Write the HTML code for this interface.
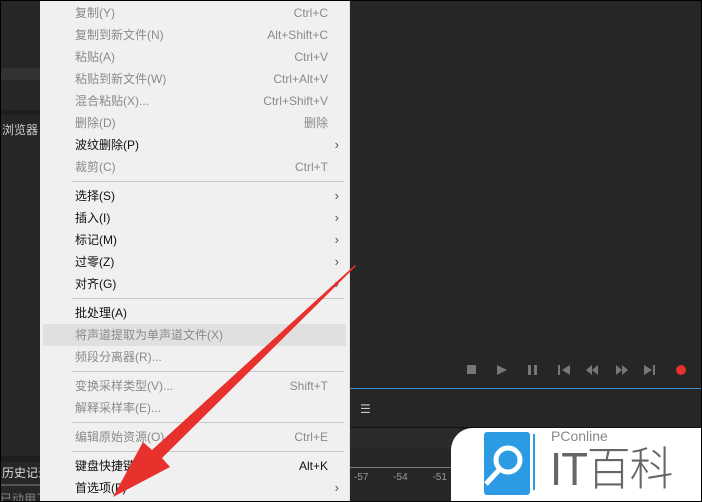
<!DOCTYPE html><html><head><meta charset="utf-8"><style>
html,body{margin:0;width:702px;height:502px;overflow:hidden}
body{background:#262626;position:relative;font-family:"Liberation Sans","Noto Sans CJK SC",sans-serif;}
.menu{position:absolute;left:40px;top:0;width:309px;height:502px;background:#f0f0f0;border-right:1px solid #ddd}
.it{position:absolute;left:0;width:309px;height:22px;line-height:22px;font-size:12px}
.it .l{position:absolute;left:35px}
.it .r{position:absolute;right:21px}
.it .a{position:absolute;right:10px;font-size:13px;color:#555}
.d{color:#8a8a8a}.e{color:#111}
.sep{position:absolute;left:32px;width:272px;height:1px;background:#c8c8c8}
</style></head><body>
<div style="position:absolute;left:0;top:68px;width:40px;height:12px;background:#333"></div>
<div style="position:absolute;left:0;top:110px;width:40px;height:5px;background:#1e1e1e"></div>
<div style="position:absolute;left:2px;top:121px;color:#ccc;font-size:12px">浏览器</div>
<div style="position:absolute;left:0;top:456px;width:40px;height:6px;background:#1e1e1e"></div>
<div style="position:absolute;left:2px;top:464px;color:#ddd;font-size:12px">历史记录</div>
<div style="position:absolute;left:0;top:484px;width:40px;height:2px;background:#555"></div>
<div style="position:absolute;left:0;top:490px;color:#888;font-size:12px">已动用了</div>
<div style="position:absolute;left:349px;top:388px;width:353px;height:1px;background:#3a8fd0"></div>
<div style="position:absolute;left:349px;top:427px;width:353px;height:1px;background:#111"></div>
<div style="position:absolute;left:349px;top:428px;width:110px;height:20px;background:#2b2b2b"></div>
<div style="position:absolute;left:360px;top:402px;color:#ccc;font-size:12px">☰</div>
<div style="position:absolute;left:349px;top:467px;width:110px;height:1px;background:#777"></div>
<div style="position:absolute;left:354px;top:472px;color:#999;font-size:10px;word-spacing:22px">-57 -54 -51</div>
<div style="position:absolute;left:467px;top:365px;width:9px;height:9px;background:#777"></div>
<svg style="position:absolute;left:490px;top:362px" width="200" height="16" fill="#777">
<polygon points="7,3 17,8 7,13"/><rect x="38" y="3" width="3" height="10"/><rect x="44" y="3" width="3" height="10"/>
<rect x="68" y="3" width="2" height="10"/><polygon points="80,3 72,8 80,13"/>
<polygon points="102,3 96,8 102,13"/><polygon points="108,3 102,8 108,13"/>
<polygon points="126,3 132,8 126,13"/><polygon points="132,3 138,8 132,13"/>
<polygon points="154,3 162,8 154,13"/><rect x="163" y="3" width="2" height="10"/>
<circle cx="191" cy="8" r="5" fill="#e5302e"/></svg>
<div style="position:absolute;left:451px;top:428px;width:251px;height:74px;background:#fff;border-top-left-radius:22px"></div>
<svg style="position:absolute;left:484px;top:432px" width="60" height="66"><rect x="0" y="0" width="46" height="63" rx="3" fill="#2d9be4"/><path d="M50 2v56" stroke="#2d9be4" stroke-width="2"/><circle cx="24" cy="28" r="12" fill="none" stroke="#fff" stroke-width="5"/><path d="M15 38L2 52" stroke="#fff" stroke-width="5"/></svg>
<div style="position:absolute;left:551px;top:428px;color:#888;font-size:14px">PConline</div>
<div style="position:absolute;left:550px;top:442px;color:#666;font-size:46px;line-height:54px;letter-spacing:-1px;font-weight:300;transform:scaleX(0.95);transform-origin:left">IT百科</div>
<div class="menu">
<div class="it d" style="top:2px"><span class="l">复制(Y)</span><span class="r">Ctrl+C</span></div>
<div class="it d" style="top:24px"><span class="l">复制到新文件(N)</span><span class="r">Alt+Shift+C</span></div>
<div class="it d" style="top:46px"><span class="l">粘贴(A)</span><span class="r">Ctrl+V</span></div>
<div class="it d" style="top:68px"><span class="l">粘贴到新文件(W)</span><span class="r">Ctrl+Alt+V</span></div>
<div class="it d" style="top:90px"><span class="l">混合粘贴(X)...</span><span class="r">Ctrl+Shift+V</span></div>
<div class="it d" style="top:112px"><span class="l">删除(D)</span><span class="r">删除</span></div>
<div class="it e" style="top:134px"><span class="l">波纹删除(P)</span><span class="a">›</span></div>
<div class="it d" style="top:156px"><span class="l">裁剪(C)</span><span class="r">Ctrl+T</span></div>
<div class="sep" style="top:181px"></div>
<div class="it e" style="top:185px"><span class="l">选择(S)</span><span class="a">›</span></div>
<div class="it e" style="top:207px"><span class="l">插入(I)</span><span class="a">›</span></div>
<div class="it e" style="top:229px"><span class="l">标记(M)</span><span class="a">›</span></div>
<div class="it e" style="top:251px"><span class="l">过零(Z)</span><span class="a">›</span></div>
<div class="it e" style="top:273px"><span class="l">对齐(G)</span><span class="a">›</span></div>
<div class="sep" style="top:298px"></div>
<div class="it e" style="top:302px"><span class="l">批处理(A)</span></div>
<div class="it d" style="top:324px;left:3px;width:303px;background:#e0e0e0"><span class="l" style="left:32px">将声道提取为单声道文件(X)</span></div>
<div class="it d" style="top:346px"><span class="l">频段分离器(R)...</span></div>
<div class="sep" style="top:371px"></div>
<div class="it d" style="top:375px"><span class="l">变换采样类型(V)...</span><span class="r">Shift+T</span></div>
<div class="it d" style="top:397px"><span class="l">解释采样率(E)...</span></div>
<div class="sep" style="top:422px"></div>
<div class="it d" style="top:426px"><span class="l">编辑原始资源(O)</span><span class="r">Ctrl+E</span></div>
<div class="sep" style="top:451px"></div>
<div class="it e" style="top:455px"><span class="l">键盘快捷键(K)...</span><span class="r">Alt+K</span></div>
<div class="it e" style="top:477px"><span class="l">首选项(F)</span><span class="a">›</span></div>
</div>
<svg style="position:absolute;left:0;top:0" width="702" height="502"><polygon points="355,265 356,266 162,458 170,467 113,497 143,442 152,450" fill="#e8302c"/></svg>
<div style="position:absolute;left:0;top:0;width:700px;height:500px;border:1px solid #000;pointer-events:none"></div>
</body></html>
